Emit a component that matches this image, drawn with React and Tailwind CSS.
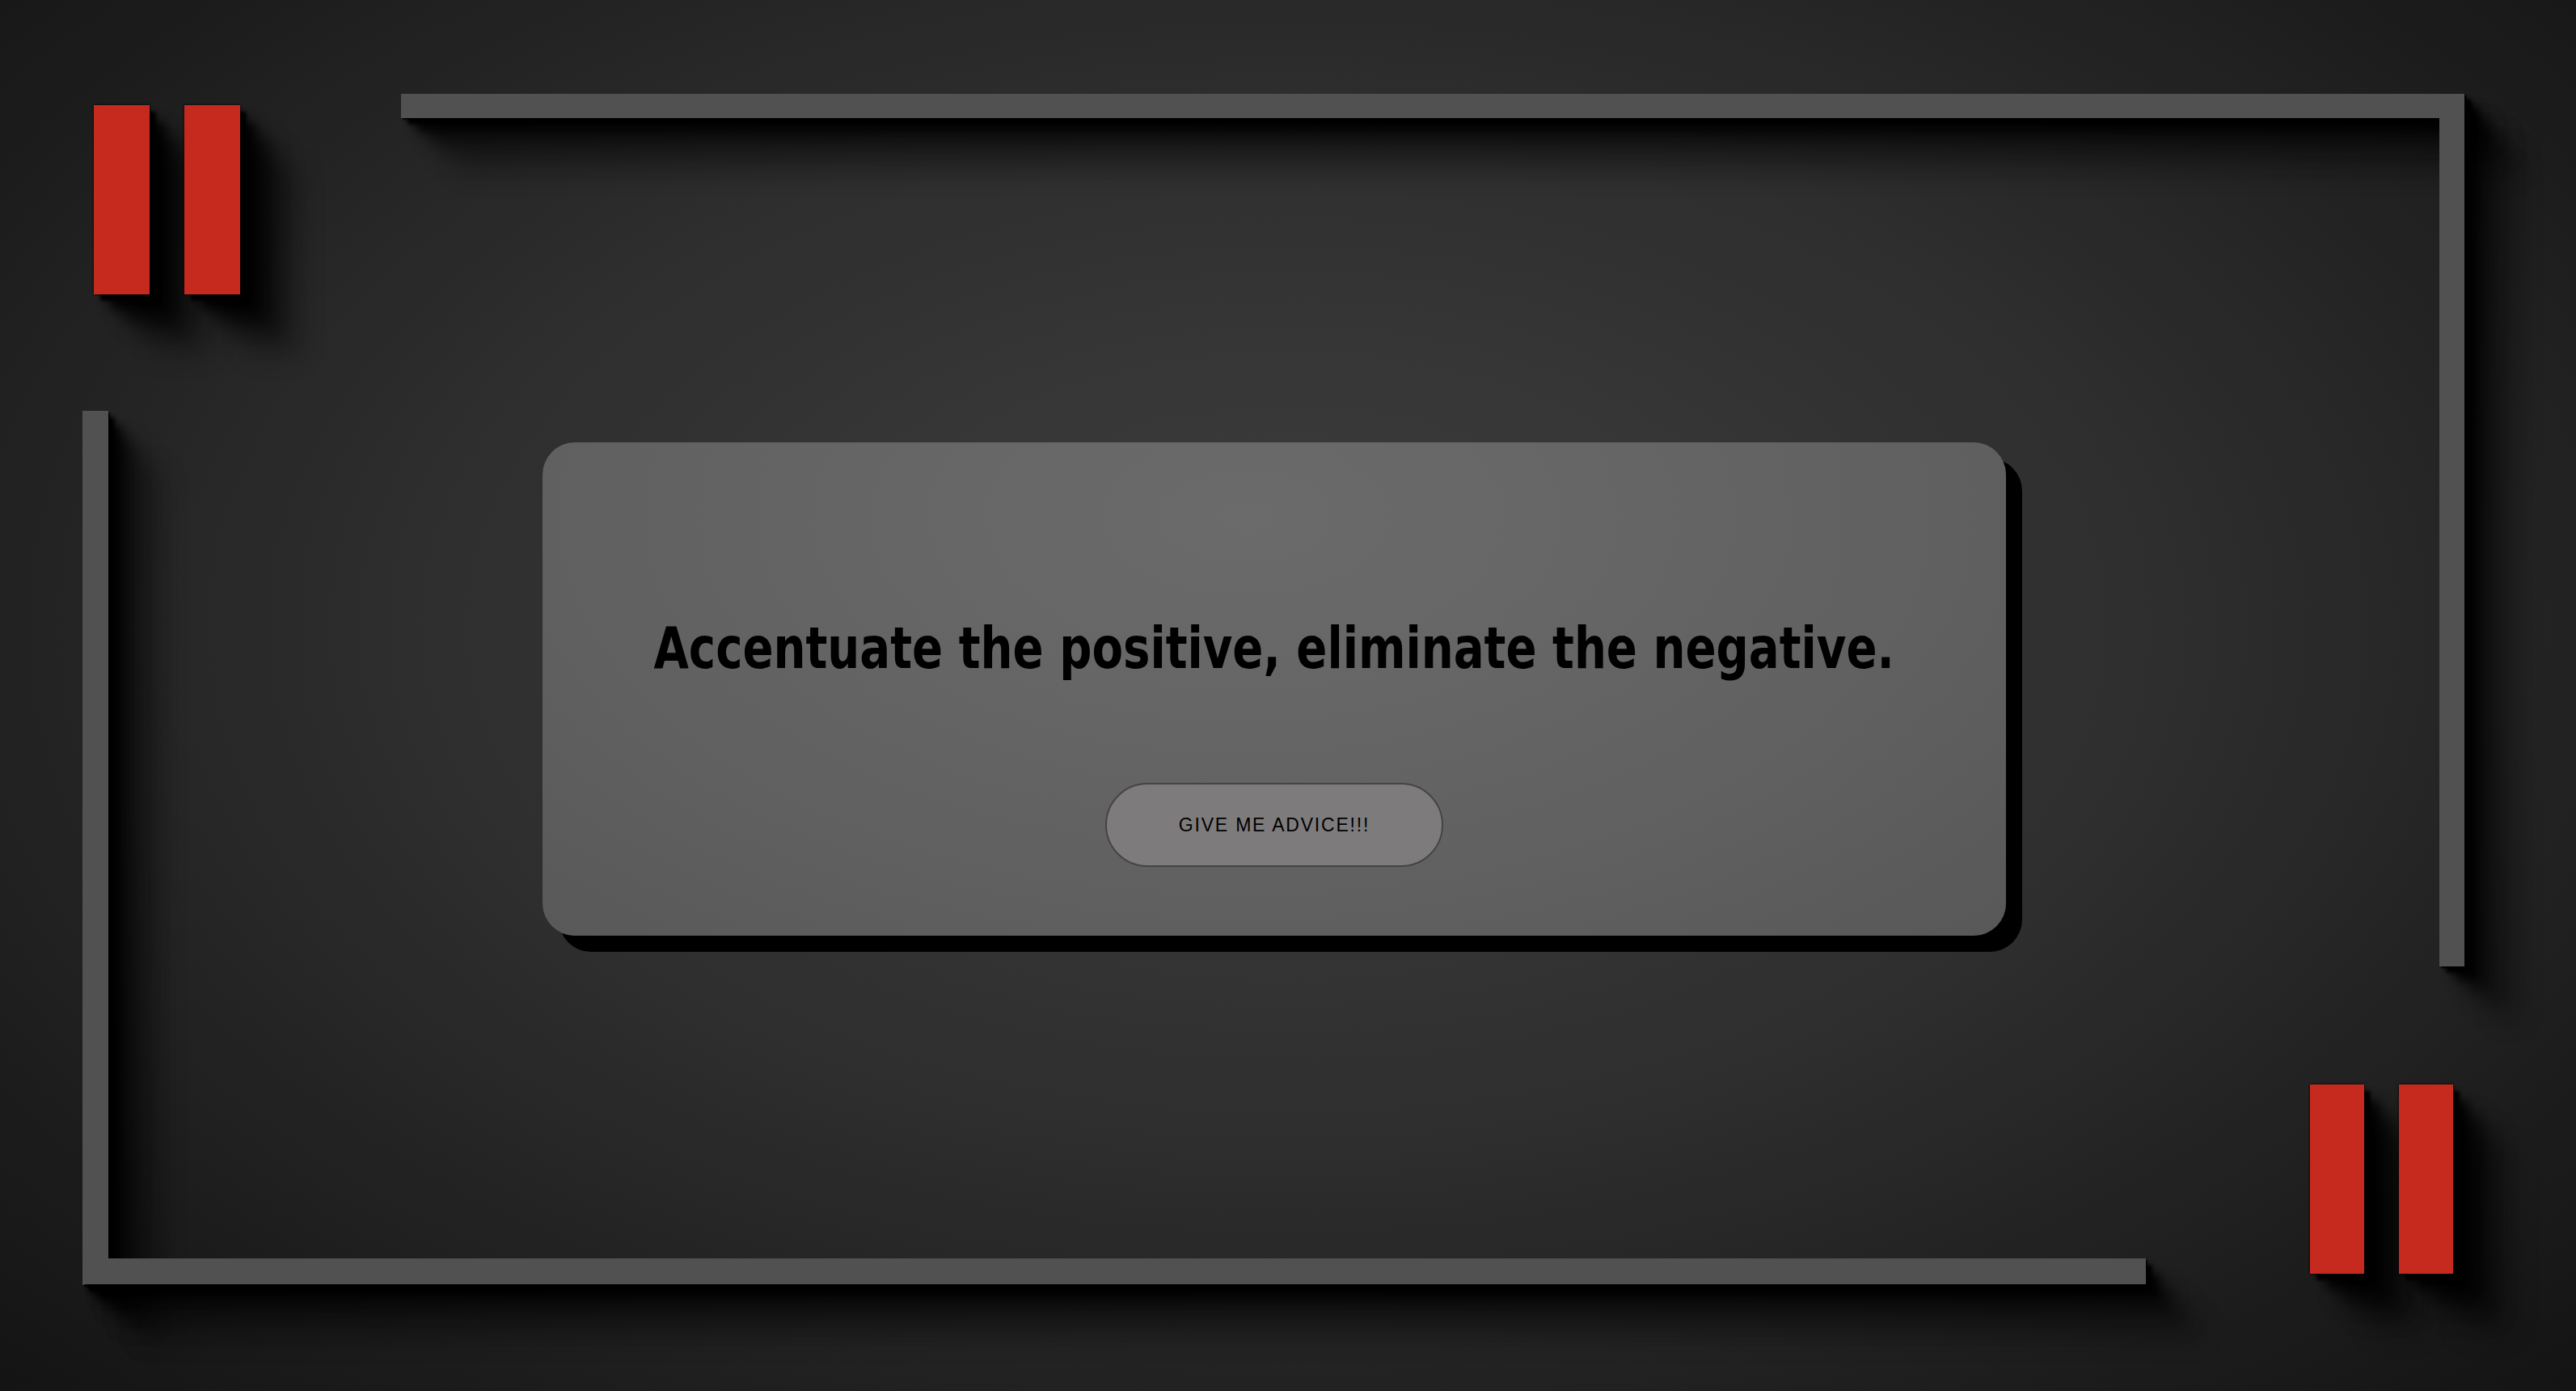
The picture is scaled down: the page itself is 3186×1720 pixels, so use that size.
export default function App() {
  const lineShadow =
    "shadow-[2px_2px_2px_#000,8px_8px_5px_#000,18px_18px_12px_rgba(0,0,0,0.8),32px_32px_18px_rgba(0,0,0,0.55),50px_50px_24px_rgba(0,0,0,0.35),70px_70px_30px_rgba(0,0,0,0.2)]";
  const barShadow =
    "shadow-[0_0_3px_#000,8px_8px_4px_#000,20px_20px_12px_rgba(0,0,0,0.85),36px_36px_18px_rgba(0,0,0,0.6),54px_54px_24px_rgba(0,0,0,0.4),76px_76px_30px_rgba(0,0,0,0.22)]";
  const barTop = `w-[69px] h-[234px] bg-[#c62a1e] ${barShadow}`;
  const barBottom = `w-[67px] h-[234px] bg-[#c62a1e] ${barShadow}`;
  return (
    <div className="relative w-full h-[1720px] overflow-hidden bg-[radial-gradient(ellipse_at_50%_45%,#3f3f3f_0%,#2e2e2e_48%,#1c1c1c_82%,#141414_100%)]">
      {/* frame lines (decorative canvas) */}
      <div className={`absolute left-[496px] top-[116px] w-[2552px] h-[30px] bg-[#515151] ${lineShadow}`} />
      <div className={`absolute left-[3017px] top-[116px] w-[31px] h-[1079px] bg-[#515151] ${lineShadow}`} />
      <div className={`absolute left-[102px] top-[508px] w-[32px] h-[1081px] bg-[#515151] ${lineShadow}`} />
      <div className={`absolute left-[102px] top-[1556px] w-[2552px] h-[32px] bg-[#515151] ${lineShadow}`} />
      {/* red bar pairs */}
      <div className="absolute left-[116px] top-[130px] flex gap-[43px]">
        <div className={barTop} />
        <div className={barTop} />
      </div>
      <div className="absolute left-[2857px] top-[1341px] flex gap-[43px]">
        <div className={barBottom} />
        <div className={barBottom} />
      </div>

      <div className="relative flex w-full h-full items-center justify-center pr-[34px] pb-[16px]">
        <div className="flex flex-col items-center w-[1810px] h-[610px] rounded-[40px] bg-[radial-gradient(ellipse_at_48%_15%,#6b6b6b_0%,#626262_55%,#585858_100%)] shadow-[20px_20px_0_#000]">
          <h1 className="mt-[218px] whitespace-nowrap font-['DejaVu_Sans',sans-serif] font-bold text-[72px] leading-[72px] text-black scale-x-[0.78]">
            Accentuate the positive, eliminate the negative.
          </h1>
          <button className="mt-[131px] flex items-center justify-center w-[418px] h-[104px] rounded-full border-2 border-[#444444] bg-[#7d7b7c] font-['Liberation_Sans',Arial,sans-serif] text-[23px] tracking-[1.8px] text-black">
            GIVE ME ADVICE!!!
          </button>
        </div>
      </div>
    </div>
  );
}
